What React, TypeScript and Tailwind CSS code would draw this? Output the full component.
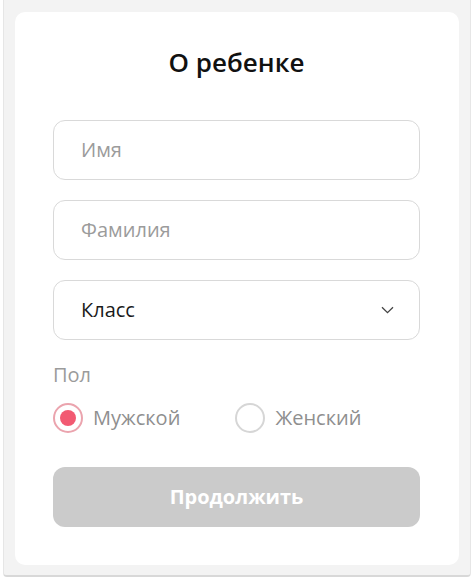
import React from "react";

function Field({ placeholder }: { placeholder: string }) {
  return (
    <div className="h-[60px] rounded-[12px] border border-[#d9d9d9] flex items-center px-[27px] text-[20px] text-[#9b9b9b]">
      {placeholder}
    </div>
  );
}

function Radio({ label, checked }: { label: string; checked?: boolean }) {
  return (
    <div className="flex items-center gap-[10px]">
      <span
        className={
          checked
            ? "w-[30px] h-[30px] rounded-full border-2 border-[#eba4ae] flex items-center justify-center"
            : "w-[30px] h-[30px] rounded-full border-2 border-[#d6d6d6] flex items-center justify-center"
        }
      >
        {checked && <span className="w-[16px] h-[16px] rounded-full bg-[#f25a72]" />}
      </span>
      <span className="text-[20px] text-[#8f8f8f]">{label}</span>
    </div>
  );
}

export default function App() {
  return (
    <div
      className="w-[474px] h-[581px] bg-white"
      style={{ fontFamily: '"Open Sans", "Noto Sans", sans-serif' }}
    >
      <div className="mx-[3px] h-[577px] bg-[#f3f3f3] border-x border-b-2 border-x-[#e6e6e6] border-b-[#d8d8d8] rounded-b-[4px] px-[11px] pt-[12px] pb-[10px]">
        <div className="h-[553px] bg-white rounded-[10px] pl-[38px] pr-[39px] pt-[35px] flex flex-col">
          <h1 className="text-center text-[26px] leading-[30px] font-semibold text-[#111]">
            О ребенке
          </h1>

          <div className="mt-[43px] flex flex-col gap-[20px]">
            <Field placeholder="Имя" />
            <Field placeholder="Фамилия" />
            <div className="h-[60px] rounded-[12px] border border-[#d9d9d9] flex items-center justify-between pl-[27px] pr-[25px] text-[20px] text-[#1a1a1a]">
              <span>Класс</span>
              <svg width="13" height="8" viewBox="0 0 13 8" fill="none">
                <path d="M1 1.2l5.5 5.5 5.5-5.5" stroke="#444" strokeWidth="1.3" />
              </svg>
            </div>
          </div>

          <div className="mt-[23px] text-[20px] leading-[24px] text-[#9b9b9b]">Пол</div>

          <div className="mt-[16px] flex items-center gap-[55px]">
            <Radio label="Мужской" checked />
            <Radio label="Женский" />
          </div>

          <button className="mt-[34px] h-[60px] rounded-[12px] bg-[#cbcbcb] text-white text-[20px] font-bold">
            Продолжить
          </button>
        </div>
      </div>
    </div>
  );
}
